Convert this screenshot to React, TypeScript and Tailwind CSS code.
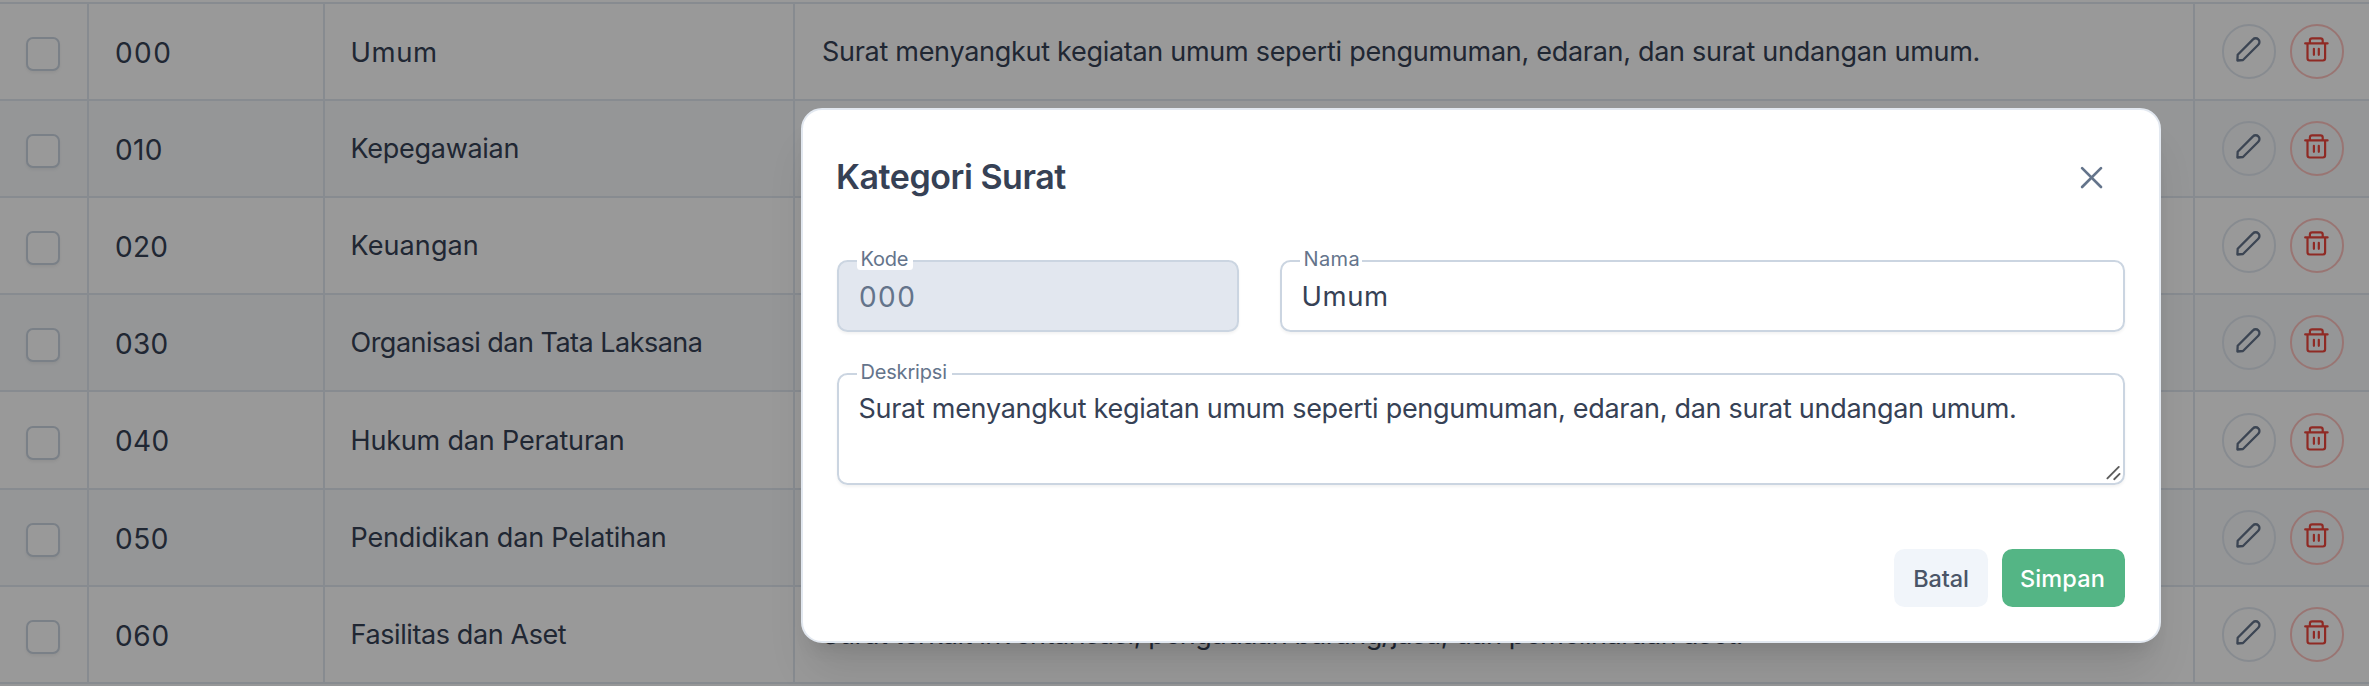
import type { ReactNode } from "react";

type Category = {
  code: string;
  codeClass: string;
  name: string;
  nameClass: string;
  description?: string;
  height: string;
};

const categories: Category[] = [
  {
    code: "000",
    codeClass: "text-[28px] tracking-[1.4px]",
    name: "Umum",
    nameClass: "text-[27.5px] tracking-[0.6px]",
    description:
      "Surat menyangkut kegiatan umum seperti pengumuman, edaran, dan surat undangan umum.",
    height: "h-[97px]",
  },
  { code: "010", codeClass: "text-[28px] tracking-[0.3px]", name: "Kepegawaian", nameClass: "tracking-[-0.28px]", height: "h-[97px]" },
  { code: "020", codeClass: "text-[28px] tracking-[0.3px]", name: "Keuangan", nameClass: "tracking-[0.1px]", height: "h-[97px]" },
  { code: "030", codeClass: "text-[28px] tracking-[0.3px]", name: "Organisasi dan Tata Laksana", nameClass: "tracking-[-0.51px]", height: "h-[97px]" },
  { code: "040", codeClass: "text-[28px] tracking-[0.4px]", name: "Hukum dan Peraturan", nameClass: "tracking-[-0.18px]", height: "h-[98px]" },
  { code: "050", codeClass: "text-[28px] tracking-[0.5px]", name: "Pendidikan dan Pelatihan", nameClass: "tracking-[-0.19px]", height: "h-[97px]" },
  {
    code: "060",
    codeClass: "text-[28px] tracking-[0.7px]",
    name: "Fasilitas dan Aset",
    nameClass: "tracking-[-0.4px]",
    description:
      "Surat terkait inventarisasi, pengadaan barang/jasa, dan pemeliharaan aset.",
    height: "h-[97px]",
  },
];

function PencilIcon() {
  return (
    <svg width="25" height="25" viewBox="0 0 25 25" fill="none" stroke="currentColor" strokeWidth="2.3" strokeLinejoin="round" className="mr-px text-[#64748b]">
      <path d="M1.4 23.5 1.7 17.7 17 2.4a3.65 3.65 0 0 1 5.3 0 3.65 3.65 0 0 1 0 5.3L7 23Z" />
    </svg>
  );
}

function TrashIcon() {
  return (
    <svg width="25" height="25" viewBox="0 0 25 25" fill="none" stroke="currentColor" strokeWidth="2.2" strokeLinecap="round" strokeLinejoin="round" className="mr-px text-[#ef463c]">
      <path d="M1.2 6.4H23.6M5.9 6.2V3.5Q5.9 1.3 8.1 1.3H16.5Q18.7 1.3 18.7 3.5V6.2M3.5 6.6V21.3Q3.5 23.5 5.7 23.5H18.9Q21.1 23.5 21.1 21.3V6.6M9.9 11.8V17.8M14.8 11.8V17.8" />
    </svg>
  );
}

function Row({ item, striped }: { item: Category; striped: boolean }) {
  return (
    <div
      className={`grid grid-cols-[89px_236px_470px_1400px_174px] border-t-2 border-[#e2e8f0] ${item.height} ${striped ? "bg-[#f8fafc]" : "bg-white"}`}
    >
      <div className="flex items-center border-r-2 border-[#e2e8f0] pl-[26px]">
        <span className="mt-[5px] size-[34px] rounded-[7px] border-2 border-[#cbd5e1] bg-white shadow-[0_2px_3px_rgba(18,18,23,0.05)]" />
      </div>
      <div className={`flex items-center border-r-2 border-[#e2e8f0] pl-[26px] pt-[2px] ${item.codeClass}`}>{item.code}</div>
      <div className={`flex items-center whitespace-nowrap border-r-2 border-[#e2e8f0] pl-[25.5px] pt-[2px] ${item.nameClass}`}>{item.name}</div>
      <div className={`flex items-center whitespace-nowrap border-r-2 border-[#e2e8f0] pl-[27px] pt-[2px] ${item.code === "060" ? "tracking-[-0.41px]" : "tracking-[-0.289px]"}`}>
        {item.description}
      </div>
      <div className="flex items-center gap-[14px] pl-[27px]">
        <span className="flex h-[55px] w-[54px] items-center justify-center rounded-full border-2 border-[#e2e8f0] pb-[4px]">
          <PencilIcon />
        </span>
        <span className="flex h-[55px] w-[54px] items-center justify-center rounded-full border-2 border-[#ffc4c0] pb-[4px]">
          <TrashIcon />
        </span>
      </div>
    </div>
  );
}

function Field({
  label,
  labelClass,
  className,
  children,
}: {
  label: string;
  labelClass: string;
  className: string;
  children: ReactNode;
}) {
  return (
    <div
      className={`relative flex rounded-[10.5px] border-2 border-[#cbd5e1] shadow-[0_2px_3px_rgba(18,18,23,0.05)] ${className}`}
    >
      <span
        className={`absolute -top-[15px] left-[18px] h-[23px] rounded-[3.5px] bg-white pl-[3.5px] text-[20px] leading-[25px] text-[#64748b] ${labelClass}`}
      >
        {label}
      </span>
      {children}
    </div>
  );
}

function CategoryDialog() {
  return (
    <div className="flex h-[535px] w-[1360px] flex-col rounded-[21px] border-2 border-[#e2e8f0] bg-white px-[34px] text-[#364155] shadow-[0_35px_44px_-9px_rgba(0,0,0,0.1),0_14px_18px_-10px_rgba(0,0,0,0.1)]">
      <div className="mb-[17px] flex h-[133px] items-center justify-between pr-[21px]">
        <h2 className="-ml-px text-[34px] font-semibold tracking-[-0.446px]">Kategori Surat</h2>
        <svg width="25" height="25" viewBox="0 0 25 25" fill="none" stroke="currentColor" strokeWidth="2.7" strokeLinecap="round" className="mt-px text-[#64748b]">
          <path d="M3.1 3.1 22 22M22 3.1 3.1 22" />
        </svg>
      </div>

      <div className="flex gap-[41px]">
        <Field label="Kode" labelClass="w-[56px] tracking-[-0.195px]" className="h-[72px] w-[402px] items-center bg-[#e2e7ef] pl-[20px] pt-[2px]">
          <span className="text-[28px] tracking-[1.4px] text-[#64748b]">000</span>
        </Field>
        <Field label="Nama" labelClass="w-[62px] tracking-[0.394px]" className="h-[72px] flex-1 items-center pl-[19.5px] pt-[2px]">
          <span className="text-[27.5px] tracking-[0.6px]">Umum</span>
        </Field>
      </div>

      <Field label="Deskripsi" labelClass="w-[95px] tracking-[-0.177px]" className="mt-[41px] h-[112px] pl-[19.5px] pt-[15px]">
        <span className="whitespace-nowrap leading-[38px] tracking-[-0.289px]">
          Surat menyangkut kegiatan umum seperti pengumuman, edaran, dan surat undangan umum.
        </span>
        <svg width="16" height="16" viewBox="0 0 16 16" fill="none" stroke="#5c5c5c" strokeWidth="1.9" strokeLinecap="round" className="absolute bottom-[2px] right-[2px]">
          <path d="M2.4 13.3 13.8 1.9M9.2 14.2 14.6 8.9" />
        </svg>
      </Field>

      <div className="mt-[64px] flex justify-end gap-[14px] text-[23.5px] font-medium">
        <button className="h-[58px] w-[94px] rounded-[10.5px] bg-[#f1f5fa] pt-[2px] tracking-[-0.134px] text-[#4a5567]">Batal</button>
        <button className="h-[58px] w-[123px] rounded-[10.5px] bg-[#54b585] pr-[2px] pt-[2px] tracking-[0.125px] text-white">Simpan</button>
      </div>
    </div>
  );
}

export default function App() {
  return (
    <div className="relative h-[686px] w-[2369px] overflow-hidden bg-white pt-[2px] font-['Inter',sans-serif] text-[27px] text-[#364155]">
      {categories.map((item, i) => (
        <Row key={item.code} item={item} striped={i % 2 === 1} />
      ))}
      <div className="h-[4px] border-t-2 border-[#e2e8f0] bg-[#f8fafc]" />
      <div className="absolute inset-0 flex items-start bg-black/40 pl-[801px] pt-[108px]">
        <CategoryDialog />
      </div>
    </div>
  );
}
